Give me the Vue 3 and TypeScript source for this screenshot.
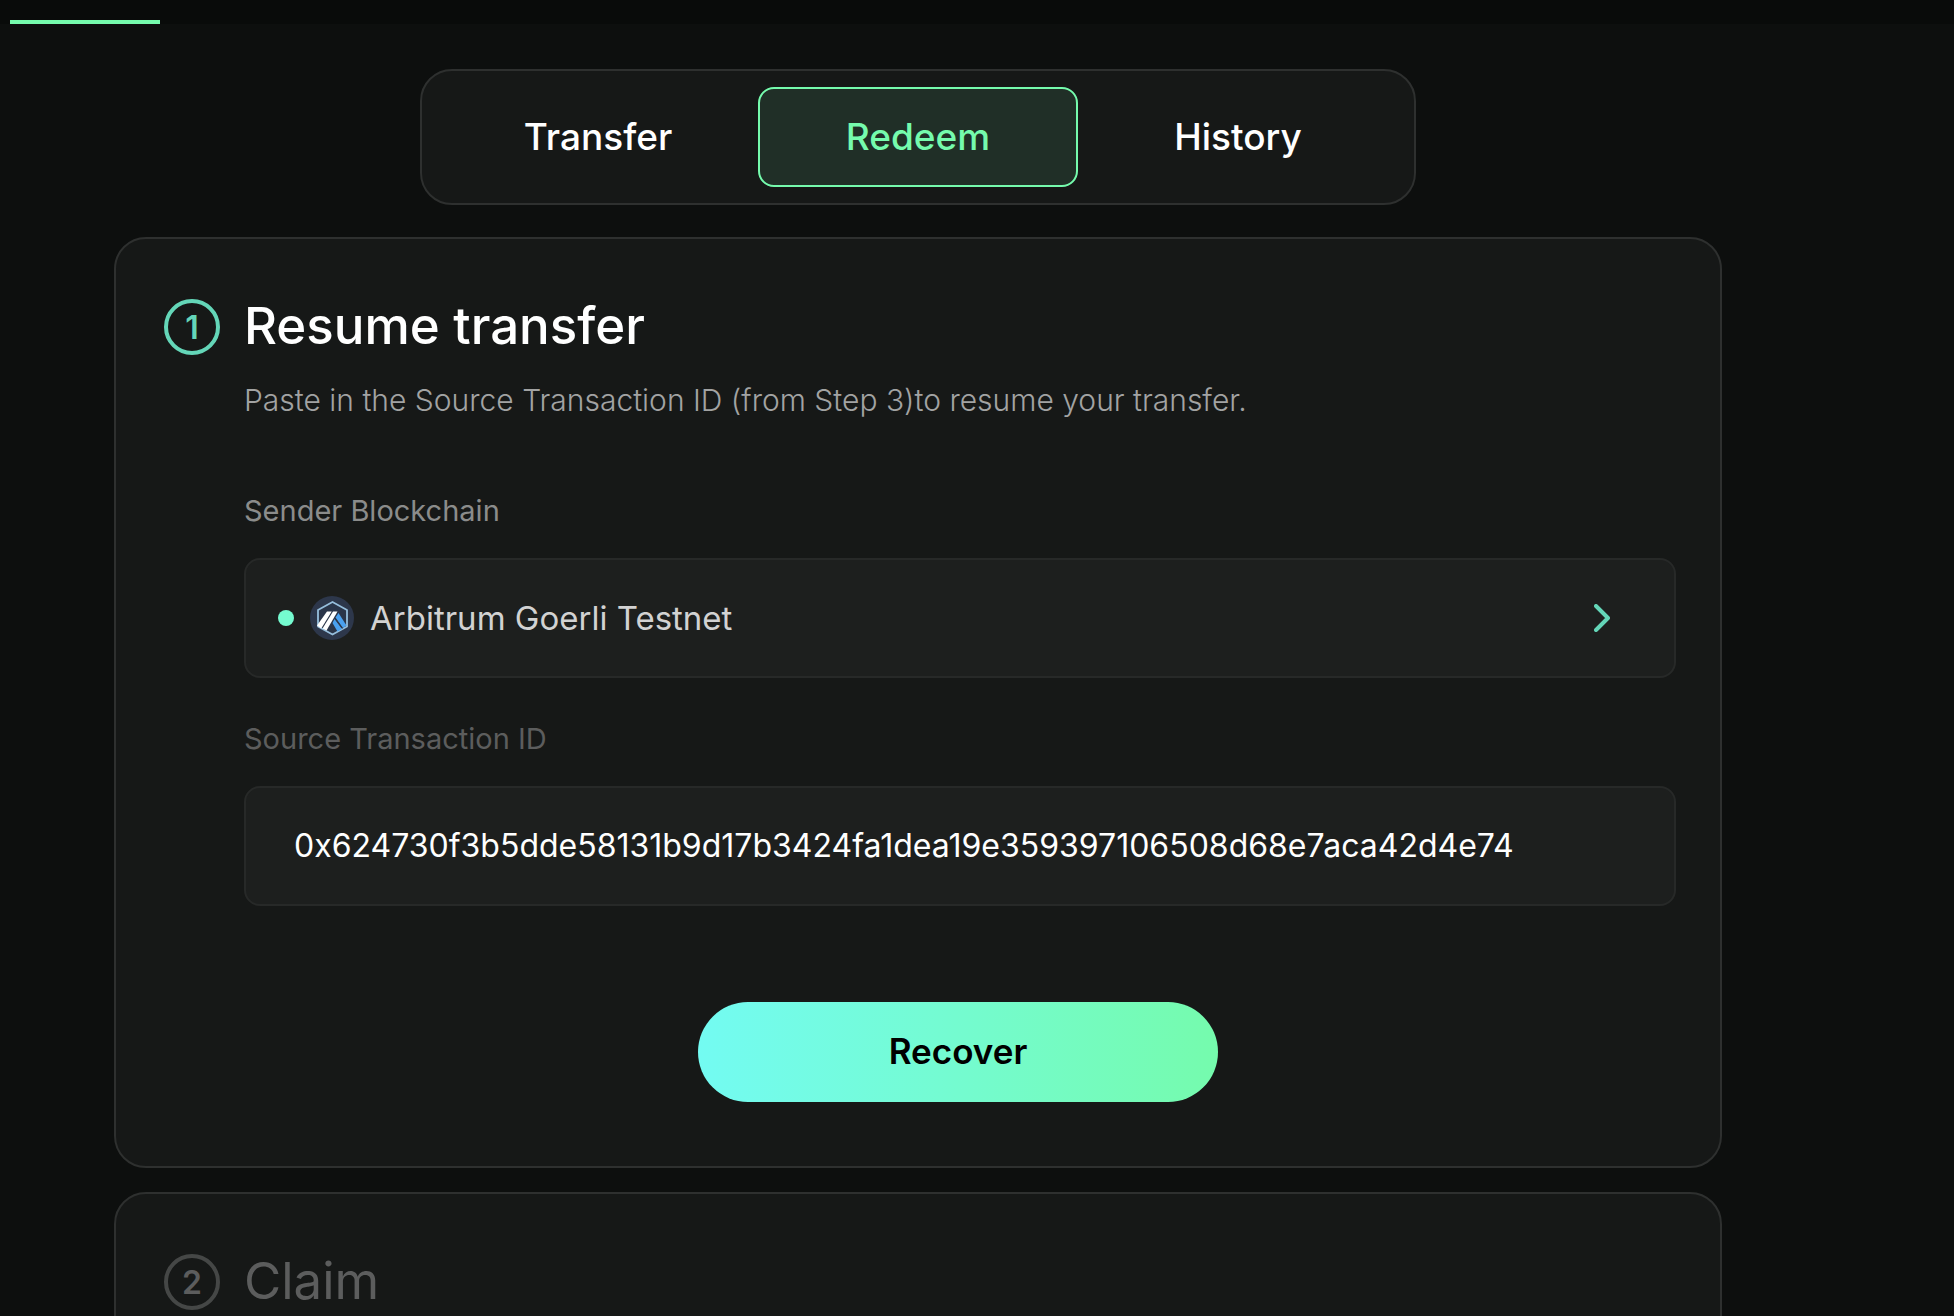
<script setup lang="ts">
import { ref } from 'vue'

const tabs = ['Transfer', 'Redeem', 'History']
const activeTab = ref('Redeem')
const network = ref('Arbitrum Goerli Testnet')
const transactionId = ref('0x624730f3b5dde58131b9d17b3424fa1dea19e359397106508d68e7aca42d4e74')
</script>

<template>
  <div class="page">
    <header class="topbar"><span class="topbar-marker"></span></header>

    <main class="content">
      <nav class="tabs">
        <button
          v-for="tab in tabs"
          :key="tab"
          type="button"
          class="tab"
          :class="{ active: tab === activeTab }"
          @click="activeTab = tab"
        >
          {{ tab }}
        </button>
      </nav>

      <section class="card">
        <div class="step">1</div>
        <div class="card-body">
          <h2 class="title">Resume transfer</h2>
          <p class="subtitle">Paste in the Source Transaction ID (from Step 3)to resume your transfer.</p>

          <div class="fields">
            <div class="field">
              <label class="label" for="network">Sender Blockchain</label>
              <button id="network" type="button" class="box picker">
                <span class="dot"></span>
                <svg class="logo" viewBox="0 0 44 44" aria-hidden="true">
                  <circle cx="22" cy="22" r="22" fill="#2d374b" />
                  <path d="M22.500 6 37 14v16.500L22.500 38.500 8 30.500V14Z" fill="#2a3549" stroke="#96bedc" stroke-width="1.800" stroke-linejoin="round" />
                  <path d="M25.500 21.500 28.500 17 36.500 29.500 33 32Z" fill="#4aa1f0" />
                  <path d="M24.500 23 32 33 27.500 35.500 22.500 27Z" fill="#4aa1f0" />
                  <path d="M25 22.300 32.500 32.500" stroke="#2d374b" stroke-width="1" />
                  <path d="M17 15.500h4.700L11.200 32.500 7 29.500Z" fill="#fff" />
                  <path d="M23 15.500h4.500L16.500 34.500 12.500 32.500Z" fill="#fff" />
                </svg>
                <span class="picker-text">{{ network }}</span>
                <svg class="chevron" viewBox="0 0 16 28" aria-hidden="true">
                  <path d="M2 2 14 14 2 26" fill="none" stroke="#64d6b8" stroke-width="4" stroke-linecap="round" stroke-linejoin="round" />
                </svg>
              </button>
            </div>
            <div class="field">
              <label class="label dim" for="transaction">Source Transaction ID</label>
              <input id="transaction" v-model="transactionId" class="box entry" type="text" spellcheck="false" />
            </div>
          </div>

          <div class="actions">
            <button type="button" class="recover">Recover</button>
          </div>
        </div>
      </section>

      <section class="card pending">
        <div class="step">2</div>
        <div class="card-body">
          <h2 class="title">Claim</h2>
        </div>
      </section>
    </main>
  </div>
</template>

<style>
html {
  scrollbar-width: none;
}
body {
  background: #0d0f0e;
}
</style>

<style scoped>
.page,
.page * {
  box-sizing: border-box;
}
.page {
  font-family: Inter, "Open Sans", sans-serif;
  color: #fff;
}
button,
input {
  font-family: inherit;
  margin: 0;
}
.topbar {
  display: flex;
  align-items: flex-end;
  height: 24px;
  padding: 0 10px;
  background: #090b0a;
}
.topbar-marker {
  width: 150px;
  height: 4px;
  background: #75fbad;
}
.content {
  display: flex;
  flex-direction: column;
  padding: 45px 232px 24px 114px;
}
.tabs {
  display: flex;
  align-self: center;
  padding: 16px;
  margin-bottom: 32px;
  border: 2px solid #2e302f;
  border-radius: 32px;
  background: #161817;
}
.tab {
  width: 320px;
  height: 100px;
  padding: 0 0 2px;
  border: 2px solid transparent;
  border-radius: 16px;
  background: none;
  color: #fff;
  font-size: 37px;
  font-weight: 500;
}
.tab.active {
  border-color: #75fbad;
  background: #202f27;
  color: #75fbad;
}
.card {
  display: flex;
  gap: 24px;
  padding: 60px 44px 64px 48px;
  margin-bottom: 24px;
  border: 2px solid #2e302f;
  border-radius: 32px;
  background: #161817;
}
.step {
  display: flex;
  flex: none;
  align-items: center;
  justify-content: center;
  width: 56px;
  height: 56px;
  border: 4px solid #64d6b8;
  border-radius: 50%;
  color: #64d6b8;
  font-size: 32px;
  font-weight: 600;
}
.card-body {
  flex: 1;
  min-width: 0;
}
.title {
  margin: 0;
  font-size: 51px;
  font-weight: 500;
  line-height: 54px;
}
.subtitle {
  margin: 26px 0 0;
  color: #a2a3a3;
  font-size: 30px;
  font-weight: 300;
  line-height: 42px;
}
.fields {
  display: flex;
  flex-direction: column;
  gap: 40px;
  margin-top: 69px;
}
.field {
  display: flex;
  flex-direction: column;
  gap: 26px;
}
.label {
  color: #8b8c8b;
  font-size: 29px;
  line-height: 42px;
}
.label.dim {
  color: #5c5d5d;
}
.box {
  width: 100%;
  height: 120px;
  border: 2px solid #272928;
  border-radius: 16px;
  background: #1d1f1e;
  font-size: 32px;
}
.picker {
  display: flex;
  align-items: center;
  gap: 16px;
  padding: 0 64px 0 32px;
  color: #d2d2d2;
  font-size: 33px;
  text-align: left;
}
.dot {
  width: 16px;
  height: 16px;
  border-radius: 50%;
  background: #75fbd0;
}
.logo {
  width: 44px;
  height: 44px;
}
.picker-text {
  flex: 1;
}
.chevron {
  width: 16px;
  height: 28px;
}
.entry {
  padding: 0 48px 2px;
  color: #fff;
}
.actions {
  display: flex;
  justify-content: center;
  margin-top: 96px;
  padding-right: 4px;
}
.recover {
  width: 520px;
  height: 100px;
  padding: 0 0 2px;
  border: 0;
  border-radius: 50px;
  background: linear-gradient(90deg, #73fbf2, #75fbad);
  color: #000;
  font-size: 35px;
  font-weight: 600;
}
.pending .step {
  border-color: #454746;
  color: #5c5d5d;
}
.pending .title {
  color: #5c5d5d;
  font-weight: 400;
}
</style>
